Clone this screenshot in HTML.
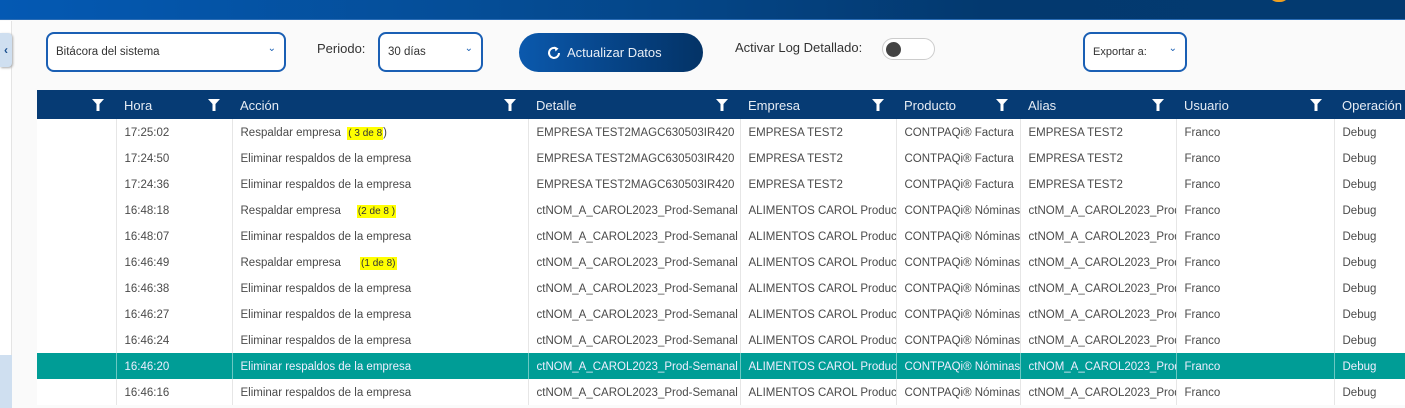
<!DOCTYPE html>
<html><head><meta charset="utf-8"><style>
*{margin:0;padding:0;box-sizing:border-box}
body{width:1405px;height:408px;overflow:hidden;background:#fafafa;font-family:"Liberation Sans",sans-serif;position:relative;color:#555}
.top{position:absolute;left:0;top:0;width:1405px;height:20px;background:linear-gradient(90deg,#0459b3,#054d96 35%,#03396f 70%,#033a70);border-bottom:1px solid #2a6cb5}
.sun{position:absolute;left:1268px;top:-8px;width:22px;height:10px;border-radius:0 0 11px 11px;background:#f0a020}
.side{position:absolute;left:0;top:21px;width:12px;height:387px;background:#fff;border-right:1px solid #e4e4e4}
.tab{position:absolute;left:0;top:33px;width:12px;height:34px;background:#cfdff0;border-radius:0 4px 4px 0;box-shadow:1px 1px 2px #aaa;color:#1a4f8f;font-size:12px;font-weight:bold;text-align:center;line-height:34px}
.sidebl{position:absolute;left:0;top:355px;width:12px;height:53px;background:#cfdff0}
.sel{position:absolute;border:2px solid #1a5fb4;border-radius:8px;background:#fff;font-size:11.5px;color:#333;padding-left:8px;line-height:36px;height:40px}
.sel:after{content:"⌄";position:absolute;right:8px;top:-3px;font-size:10px;color:#1a5fb4}
.lbl{position:absolute;font-size:13px;color:#333}
.btn{position:absolute;left:519px;top:33px;width:184px;height:39px;border-radius:20px;background:linear-gradient(90deg,#0b59ad,#053d7a 70%,#043366);color:#e8eef6;font-size:13px;line-height:39px;padding-left:48px}
.btn svg{position:absolute;left:28px;top:13px}
.tog{position:absolute;left:882px;top:38px;width:53px;height:22px;border-radius:11px;background:#fff;border:1px solid #ccc}
.tog i{position:absolute;left:3px;top:3px;width:15px;height:15px;border-radius:50%;background:#444}
table{position:absolute;left:37px;top:90px;width:1377px;border-collapse:collapse;table-layout:fixed;font-size:11.5px}
th{background:#063b74;color:#e6ecf4;height:29px;font-weight:normal;text-align:left;padding-left:8px;padding-top:2px;font-size:13px;position:relative}
th .f{position:absolute;right:12px;top:9px}
td{height:26px;padding-left:8px;padding-top:2px;white-space:nowrap;overflow:hidden;border-left:1px solid #e6e6e6;color:#4a4a4a;background:#fff}
tr.h td{background:#009d96;color:#eef;border-left-color:#6cc8c3}
.y{background:#ffff00;color:#333;padding:1px 1px;font-size:10px}
</style></head><body>
<div class="top"><div class="sun"></div></div>
<div class="side"></div><div class="tab">‹</div><div class="sidebl"></div>
<div class="sel" style="left:46px;top:32px;width:240px">Bitácora del sistema</div>
<div class="lbl" style="left:317px;top:41px">Periodo:</div>
<div class="sel" style="left:378px;top:32px;width:105px">30 días</div>
<div class="btn"><svg width="14" height="14" viewBox="0 0 14 14"><path d="M9.5 2.6A5 5 0 1 0 12 7" fill="none" stroke="#fff" stroke-width="2"/><path d="M7.5 0.5L11.5 2.5L8.5 5.5Z" fill="#fff"/></svg>Actualizar Datos</div>
<div class="lbl" style="left:735px;top:40px">Activar Log Detallado:</div>
<div class="tog"><i></i></div>
<div class="sel" style="left:1083px;top:32px;width:104px;font-size:11px">Exportar a:</div>
<table>
<colgroup><col style="width:79px"><col style="width:116px"><col style="width:296px"><col style="width:212px"><col style="width:156px"><col style="width:124px"><col style="width:156px"><col style="width:158px"><col style="width:80px"></colgroup>
<tr><th><svg class="f" width="12" height="12"><path d="M0 0H12L7.5 5V12H4.5V5Z" fill="#fff"/></svg></th><th>Hora<svg class="f" width="12" height="12"><path d="M0 0H12L7.5 5V12H4.5V5Z" fill="#fff"/></svg></th><th>Acción<svg class="f" width="12" height="12"><path d="M0 0H12L7.5 5V12H4.5V5Z" fill="#fff"/></svg></th><th>Detalle<svg class="f" width="12" height="12"><path d="M0 0H12L7.5 5V12H4.5V5Z" fill="#fff"/></svg></th><th>Empresa<svg class="f" width="12" height="12"><path d="M0 0H12L7.5 5V12H4.5V5Z" fill="#fff"/></svg></th><th>Producto<svg class="f" width="12" height="12"><path d="M0 0H12L7.5 5V12H4.5V5Z" fill="#fff"/></svg></th><th>Alias<svg class="f" width="12" height="12"><path d="M0 0H12L7.5 5V12H4.5V5Z" fill="#fff"/></svg></th><th>Usuario<svg class="f" width="12" height="12"><path d="M0 0H12L7.5 5V12H4.5V5Z" fill="#fff"/></svg></th><th>Operación</th></tr>
<tr><td style="border-left:none"></td><td>17:25:02</td><td>Respaldar empresa &nbsp;<span class="y">( 3 de 8</span>)</td><td>EMPRESA TEST2MAGC630503IR420</td><td>EMPRESA TEST2</td><td>CONTPAQi® Factura</td><td>EMPRESA TEST2</td><td>Franco</td><td>Debug</td></tr>
<tr><td style="border-left:none"></td><td>17:24:50</td><td>Eliminar respaldos de la empresa</td><td>EMPRESA TEST2MAGC630503IR420</td><td>EMPRESA TEST2</td><td>CONTPAQi® Factura</td><td>EMPRESA TEST2</td><td>Franco</td><td>Debug</td></tr>
<tr><td style="border-left:none"></td><td>17:24:36</td><td>Eliminar respaldos de la empresa</td><td>EMPRESA TEST2MAGC630503IR420</td><td>EMPRESA TEST2</td><td>CONTPAQi® Factura</td><td>EMPRESA TEST2</td><td>Franco</td><td>Debug</td></tr>
<tr><td style="border-left:none"></td><td>16:48:18</td><td>Respaldar empresa &nbsp;&nbsp;&nbsp;&nbsp;<span class="y">(2 de 8 )</span></td><td>ctNOM_A_CAROL2023_Prod-Semanal</td><td>ALIMENTOS CAROL Productos</td><td>CONTPAQi® Nóminas</td><td>ctNOM_A_CAROL2023_Prod</td><td>Franco</td><td>Debug</td></tr>
<tr><td style="border-left:none"></td><td>16:48:07</td><td>Eliminar respaldos de la empresa</td><td>ctNOM_A_CAROL2023_Prod-Semanal</td><td>ALIMENTOS CAROL Productos</td><td>CONTPAQi® Nóminas</td><td>ctNOM_A_CAROL2023_Prod</td><td>Franco</td><td>Debug</td></tr>
<tr><td style="border-left:none"></td><td>16:46:49</td><td>Respaldar empresa &nbsp;&nbsp;&nbsp;&nbsp;&nbsp;<span class="y">(1 de 8)</span></td><td>ctNOM_A_CAROL2023_Prod-Semanal</td><td>ALIMENTOS CAROL Productos</td><td>CONTPAQi® Nóminas</td><td>ctNOM_A_CAROL2023_Prod</td><td>Franco</td><td>Debug</td></tr>
<tr><td style="border-left:none"></td><td>16:46:38</td><td>Eliminar respaldos de la empresa</td><td>ctNOM_A_CAROL2023_Prod-Semanal</td><td>ALIMENTOS CAROL Productos</td><td>CONTPAQi® Nóminas</td><td>ctNOM_A_CAROL2023_Prod</td><td>Franco</td><td>Debug</td></tr>
<tr><td style="border-left:none"></td><td>16:46:27</td><td>Eliminar respaldos de la empresa</td><td>ctNOM_A_CAROL2023_Prod-Semanal</td><td>ALIMENTOS CAROL Productos</td><td>CONTPAQi® Nóminas</td><td>ctNOM_A_CAROL2023_Prod</td><td>Franco</td><td>Debug</td></tr>
<tr><td style="border-left:none"></td><td>16:46:24</td><td>Eliminar respaldos de la empresa</td><td>ctNOM_A_CAROL2023_Prod-Semanal</td><td>ALIMENTOS CAROL Productos</td><td>CONTPAQi® Nóminas</td><td>ctNOM_A_CAROL2023_Prod</td><td>Franco</td><td>Debug</td></tr>
<tr class="h"><td style="border-left:none"></td><td>16:46:20</td><td>Eliminar respaldos de la empresa</td><td>ctNOM_A_CAROL2023_Prod-Semanal</td><td>ALIMENTOS CAROL Productos</td><td>CONTPAQi® Nóminas</td><td>ctNOM_A_CAROL2023_Prod</td><td>Franco</td><td>Debug</td></tr>
<tr><td style="border-left:none"></td><td>16:46:16</td><td>Eliminar respaldos de la empresa</td><td>ctNOM_A_CAROL2023_Prod-Semanal</td><td>ALIMENTOS CAROL Productos</td><td>CONTPAQi® Nóminas</td><td>ctNOM_A_CAROL2023_Prod</td><td>Franco</td><td>Debug</td></tr>
</table>
</body></html>
